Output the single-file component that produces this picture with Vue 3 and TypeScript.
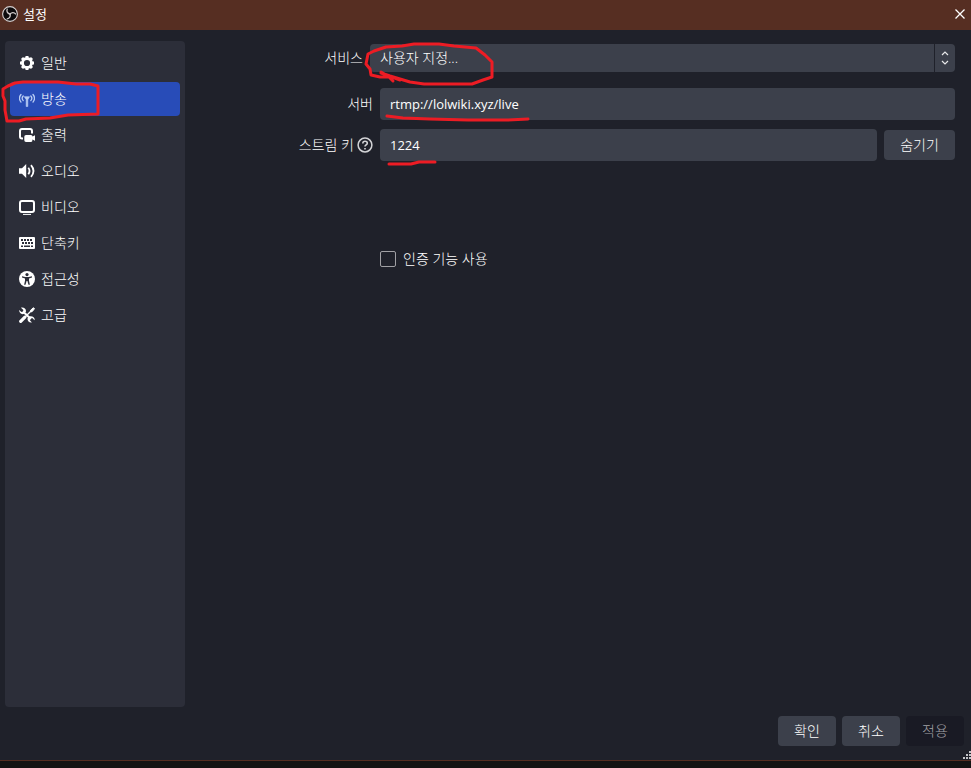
<script setup lang="ts">
import { ref } from 'vue'

type Section = { id: string; label: string }

const sections: Section[] = [
  { id: 'general', label: '일반' },
  { id: 'stream', label: '방송' },
  { id: 'output', label: '출력' },
  { id: 'audio', label: '오디오' },
  { id: 'video', label: '비디오' },
  { id: 'hotkeys', label: '단축키' },
  { id: 'access', label: '접근성' },
  { id: 'advanced', label: '고급' },
]

const current = ref('stream')
const service = ref('custom')
const server = ref('rtmp://lolwiki.xyz/live')
const streamKey = ref('1224')
const useAuth = ref(false)
</script>

<template>
  <div class="window">
    <header class="titlebar">
      <svg class="logo" viewBox="0 0 16 16" aria-hidden="true">
        <circle cx="8" cy="8" r="7.4" fill="#0b0a0c" stroke="#d6d0d0" stroke-width="1.1" />
        <g fill="none" stroke="#cfcaca" stroke-width="1.3" stroke-linecap="round">
          <path d="M8 8C5.4 7.4 4.300 5.200 5.200 3.200" />
          <path d="M8 8C5.4 7.4 4.300 5.200 5.200 3.200" transform="rotate(120 8 8)" />
          <path d="M8 8C5.4 7.4 4.300 5.200 5.200 3.200" transform="rotate(240 8 8)" />
        </g>
      </svg>
      <h1>설정</h1>
      <button class="close" type="button" aria-label="닫기">
        <svg viewBox="0 0 12 12"><path d="M1.500 1.500l9 9m0-9l-9 9" stroke="#fff" stroke-width="1.300" fill="none" /></svg>
      </button>
    </header>

    <div class="body">
      <div class="columns">
        <nav class="sidebar">
          <button
            v-for="s in sections"
            :key="s.id"
            type="button"
            class="item"
            :class="{ active: s.id === current }"
            @click="current = s.id"
          >
            <svg class="icon" viewBox="0 0 16 16" aria-hidden="true">
              <g v-if="s.id === 'general'" fill="none" stroke="#fff">
                <circle cx="8" cy="8" r="4.500" stroke-width="2.800" />
                <path d="M8 1v2M8 13v2M1 8h2M13 8h2M3 3l1.500 1.500M11.500 11.500L13 13M3 13l1.500-1.500M11.500 4.500L13 3" stroke-width="3" />
              </g>
              <g v-else-if="s.id === 'stream'" fill="none" stroke="#b9cdf5" stroke-linecap="round">
                <path d="M4.200 5c-1.200 1.300-1.200 3.300 0 4.600M11.800 5c1.200 1.300 1.200 3.300 0 4.600M2 3.500c-1.800 2.200-1.800 5.400 0 7.600M14 3.500c1.800 2.200 1.800 5.400 0 7.600" stroke-width="1.300" />
                <path d="M5.500 5.700h5L8.800 8.800v6.700H7.200V8.800z" fill="#b9cdf5" stroke-width=".6" />
              </g>
              <g v-else-if="s.id === 'output'">
                <path d="M4 11.500H3a2 2 0 0 1-2-2V4a2 2 0 0 1 2-2h8a2 2 0 0 1 2 2v2.500" fill="none" stroke="#fff" stroke-width="2" />
                <path d="M7 8h5q1.500 0 1.500 1.500L16 8.300v5.400l-2.500-1.200Q13.500 15 12 15H7q-1.700 0-1.700-1.700V9.700Q5.300 8 7 8z" fill="#fff" />
              </g>
              <g v-else-if="s.id === 'audio'">
                <path d="M0 5.200h3L7.200 1v14L3 10.800H0z" fill="#fff" />
                <path d="M9.300 4.800q2.500 3.200 0 6.400M12 2.200q5 5.800 0 11.600" fill="none" stroke="#fff" stroke-width="1.800" />
              </g>
              <g v-else-if="s.id === 'video'">
                <rect x="1" y="2" width="14" height="11" rx="2" fill="none" stroke="#fff" stroke-width="2" />
                <path d="M4 15.400h8" stroke="#fff" stroke-width="1" />
              </g>
              <g v-else-if="s.id === 'hotkeys'">
                <rect y="2" width="16" height="12" rx="1" fill="#fff" />
                <path d="M2 5h12M3 8h11" stroke="#2c2e39" stroke-width="2" stroke-dasharray="2 1" />
                <path d="M2 11.200h2m1 0h6m1 0h2" stroke="#2c2e39" stroke-width="1.500" />
              </g>
              <g v-else-if="s.id === 'access'">
                <circle cx="8" cy="8" r="8" fill="#fff" />
                <circle cx="8" cy="3.600" r="1.600" fill="#2c2e39" />
                <path d="M3 5.300l3.200.7h3.600l3.200-.7v1.300l-3 .9v2.200l.9 4H9.500L8.400 10h-.8l-1.100 3.700H5.100l.9-4V7.500l-3-.9z" fill="#2c2e39" />
              </g>
              <g v-else>
                <path d="M4.800 5.200l7 6.800" stroke="#fff" stroke-width="2" />
                <path d="M2 .7l2.400 2.300-.5 1.500-1.500.5L.2 3C-.2 5.500 2 7.700 4.700 7L6.900 4.700C7.500 2 5 .1 2 .7zM10.200 9.500L8.600 11.200c-.6 2.500 1.400 4.800 4.300 4.300l-2-2.300.6-1.600 1.700-.5 2.400 2.100c.5-2.500-2.200-4.800-5.400-3.700z" fill="#fff" />
                <path d="M1.700 14.300l4.200-4.200" stroke="#fff" stroke-width="3.200" stroke-linecap="round" />
                <path d="M5.800 10.200L13 3" stroke="#fff" stroke-width="1.300" />
                <path d="M11.700 3.100L14.500.7l1 1-2.300 2.900-1.400.3z" fill="#fff" stroke="#fff" />
              </g>
            </svg>
            <span>{{ s.label }}</span>
            <svg v-if="s.id === 'stream'" class="mark mark-item" viewBox="0 0 104 48" aria-hidden="true">
              <path d="M98 10L90 8 76 8 58 6 23 6 15 7 8 10 3 13 3 20 5 25 5 34 7 45 19 45 26 43 50 42 68 39 98 38z" />
            </svg>
          </button>
        </nav>

        <main class="form">
          <div class="row service">
            <label for="service">서비스</label>
            <div class="combo">
              <select id="service" v-model="service">
                <option value="custom">사용자 지정...</option>
              </select>
              <span class="arrows" aria-hidden="true">
                <svg viewBox="0 0 8 14"><path d="M1 4l3-3 3 3M1 10l3 3 3-3" fill="none" stroke="#e8e8ea" stroke-width="1.200" /></svg>
              </span>
              <svg class="mark mark-service" viewBox="0 0 136 46" aria-hidden="true">
                <path d="M36 39L28 36 16 36 7 34 6 28 2 23 4 13 10 10 22 6 38 5 50 3 75 3 90 5 112 7 121 14 128 21 128 36 119 39 108 43 60 43 46 41 36 38 26 35 17 32M17 31L24 35 29 40" />
              </svg>
            </div>
          </div>

          <div class="row server">
            <label for="server">서버</label>
            <div class="field">
              <input id="server" v-model="server" type="text" />
              <svg class="mark mark-server" viewBox="0 0 148 10" aria-hidden="true">
                <path d="M4 3L20 5 47 6 85 7 125 7 145 6" />
              </svg>
            </div>
          </div>

          <div class="row key">
            <div class="caption">
              <label for="key">스트림 키</label>
              <svg class="help" viewBox="0 0 16 16" aria-hidden="true">
                <circle cx="8" cy="8" r="6.900" fill="none" stroke="#d2d3d6" stroke-width="1.500" />
                <path d="M5.800 6.400C5.800 3.400 10.300 3.600 10.300 6.200 10.300 7.800 8 7.900 8 9.500M8 10.900v1.500" fill="none" stroke="#d2d3d6" stroke-width="1.600" />
              </svg>
            </div>
            <div class="field">
              <input id="key" v-model="streamKey" type="text" />
              <svg class="mark mark-key" viewBox="0 0 54 10" aria-hidden="true">
                <path d="M4 6L26 6 34 4 50 4" />
              </svg>
            </div>
            <button class="btn hide" type="button">숨기기</button>
          </div>

          <label class="check">
            <input v-model="useAuth" type="checkbox" />
            <span>인증 기능 사용</span>
          </label>
        </main>
      </div>

      <footer class="footer">
        <button class="btn" type="button">확인</button>
        <button class="btn" type="button">취소</button>
        <button class="btn" type="button" disabled>적용</button>
        <svg class="grip" viewBox="0 0 8 8" aria-hidden="true">
          <path d="M6 0h2v2H6zM3 3h2v2H3zM6 3h2v2H6zM0 6h2v2H0zM3 6h2v2H3zM6 6h2v2H6z" fill="#c4c4c8" />
        </svg>
      </footer>
    </div>
    <div class="edge"></div>
  </div>
</template>

<style>
body {
  margin: 0;
  background: #141414;
}
</style>

<style scoped>
.window {
  display: flex;
  flex-direction: column;
  min-height: 100vh;
  color: #fff;
  font: 300 14px/20px "Open Sans", "Noto Sans CJK KR", sans-serif;
}
.window *,
.window {
  box-sizing: border-box;
}
button,
input,
select {
  margin: 0;
  border: 0;
  font: inherit;
  color: inherit;
}
.titlebar {
  display: flex;
  align-items: center;
  height: 30px;
  padding: 0 5px 2px 2px;
  background: #562e22;
}
.logo {
  width: 16px;
  height: 16px;
  margin-right: 5px;
}
h1 {
  flex: 1;
  margin: 0;
  font-size: 13px;
  font-weight: 400;
}
.close {
  display: flex;
  padding: 0;
  background: none;
}
.close svg {
  width: 12px;
  height: 12px;
}
.body {
  flex: 1;
  display: flex;
  flex-direction: column;
  position: relative;
  padding: 11px 7px 14px 5px;
  background: #1f212a;
  border-bottom: 1px solid #562e22;
}
.columns {
  flex: 1;
  display: flex;
}
.sidebar {
  flex: 0 0 180px;
  display: flex;
  flex-direction: column;
  gap: 2px;
  padding: 5px;
  border-radius: 4px;
  background: #2c2e39;
}
.item {
  position: relative;
  display: flex;
  align-items: center;
  gap: 6px;
  height: 34px;
  padding: 0 9px;
  border-radius: 4px;
  background: none;
  text-align: left;
}
.item.active {
  background: #284cb8;
}
.icon {
  width: 16px;
  height: 16px;
}
.form {
  flex: 1;
  min-width: 0;
  padding: 3px 9px 0 0;
}
.row {
  display: flex;
  align-items: center;
  gap: 7px;
}
.row > label,
.caption {
  flex: 0 0 188px;
  text-align: right;
}
.row.service > label {
  flex-basis: 178px;
}
.service {
  margin-bottom: 16px;
}
.server {
  margin-bottom: 9px;
}
.caption {
  display: flex;
  justify-content: flex-end;
  align-items: center;
  gap: 3px;
}
.help {
  width: 16px;
  height: 16px;
}
.combo {
  position: relative;
  flex: 1;
  display: flex;
  gap: 1px;
  height: 28px;
}
select {
  flex: 1;
  appearance: none;
  padding: 0 10px;
  border-radius: 4px 0 0 4px;
  background: #3c404b;
}
.arrows {
  flex: 0 0 20px;
  display: flex;
  align-items: center;
  justify-content: center;
  border-radius: 0 4px 4px 0;
  background: #3c404b;
}
.arrows svg {
  width: 8px;
  height: 14px;
}
.field {
  position: relative;
  flex: 1;
}
.field input {
  display: block;
  width: 100%;
  height: 32px;
  padding: 0 10px;
  border-radius: 4px;
  background: #3c404b;
  font-size: 13px;
  font-weight: 400;
}
.btn {
  width: 58px;
  height: 30px;
  padding: 0;
  border-radius: 4px;
  background: #3c404b;
}
.btn.hide {
  width: 71px;
}
.btn:disabled {
  background: #191a24;
  color: #a2a2a6;
}
.check {
  display: flex;
  align-items: center;
  gap: 7px;
  width: max-content;
  margin: 88px 0 0 195px;
}
.check input {
  appearance: none;
  width: 16px;
  height: 16px;
  border: 1px solid #a0a0a4;
  border-radius: 2px;
}
.check input:checked {
  background: #284cb8;
}
.footer {
  display: flex;
  justify-content: flex-end;
  gap: 6px;
  padding-top: 9px;
}
.grip {
  position: absolute;
  right: 0;
  bottom: 1px;
  width: 8px;
  height: 8px;
}
.edge {
  height: 7px;
  background: #141414;
}
.mark {
  position: absolute;
  z-index: 1;
  overflow: visible;
  pointer-events: none;
  fill: none;
  stroke: #ed1c24;
  stroke-width: 3px;
  stroke-linecap: round;
  stroke-linejoin: round;
}
.mark-item {
  left: -10px;
  top: -6px;
  width: 104px;
  height: 48px;
}
.mark-service {
  left: -6px;
  top: -3px;
  width: 136px;
  height: 46px;
}
.mark-server {
  left: 3px;
  top: 25px;
  width: 148px;
  height: 10px;
}
.mark-key {
  left: 5px;
  top: 29px;
  width: 54px;
  height: 10px;
}
</style>
